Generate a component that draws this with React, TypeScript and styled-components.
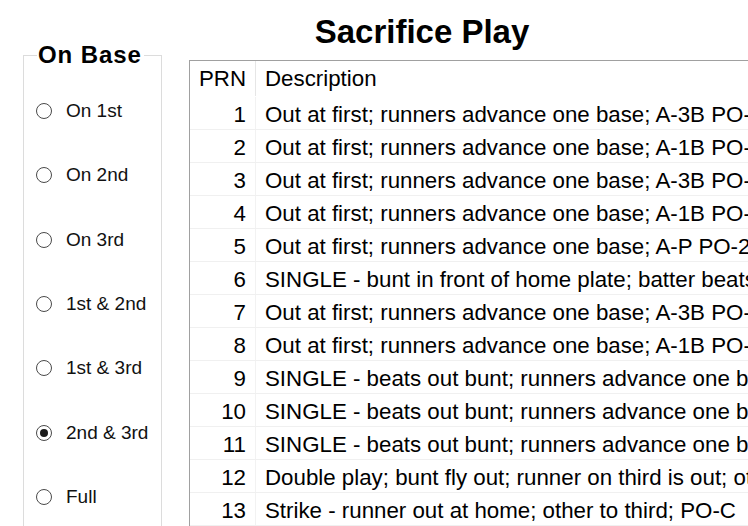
import React from "react";
import styled, { createGlobalStyle } from "styled-components";

const GlobalStyle = createGlobalStyle`
  html, body {
    margin: 0;
    padding: 0;
    background: #ffffff;
  }
  body {
    font-family: "Liberation Sans", Arial, sans-serif;
    color: #000000;
    overflow: hidden;
  }
`;

const Page = styled.div`
  width: 748px;
  height: 526px;
  overflow: hidden;
  display: flex;
  flex-direction: column;
`;

const Title = styled.h1`
  margin: 0;
  padding: 13px 0 0 96px;
  font-size: 33px;
  font-weight: bold;
  line-height: 37px;
  text-align: center;
`;

const Body = styled.div`
  display: flex;
  align-items: flex-start;
  gap: 27px;
  padding-left: 23px;
  margin-top: -7px;
`;

const GroupBox = styled.fieldset`
  width: 139px;
  height: 520px;
  margin: 0;
  padding: 12px 0 0 12px;
  border: 1px solid #dcdcdc;
  box-sizing: border-box;
  flex-shrink: 0;
`;

const Legend = styled.legend`
  margin-left: 1px;
  padding: 0 2px 0 1px;
  font-size: 24px;
  font-weight: bold;
  line-height: 24px;
  letter-spacing: 0.9px;
`;

const RadioList = styled.div`
  display: grid;
  grid-auto-rows: 64.33px;
`;

const RadioItem = styled.label`
  display: flex;
  align-items: center;
  gap: 14px;
  font-size: 19px;
  color: #111111;
`;

const RadioCircle = styled.span<{ $checked?: boolean }>`
  width: 16px;
  height: 16px;
  border-radius: 50%;
  border: 1.5px solid #4a4a4a;
  box-sizing: border-box;
  display: flex;
  align-items: center;
  justify-content: center;
  flex-shrink: 0;

  &::after {
    content: "";
    width: 8px;
    height: 8px;
    border-radius: 50%;
    background: #1a1a1a;
    display: ${(p) => (p.$checked ? "block" : "none")};
  }
`;

const Grid = styled.div`
  margin-top: 17px;
  width: 640px;
  flex-shrink: 0;
  border-left: 1px solid #a0a0a0;
  border-top: 1px solid #a0a0a0;
  font-size: 22.3px;
  white-space: nowrap;
`;

const Row = styled.div<{ $header?: boolean }>`
  display: grid;
  grid-template-columns: 66px 1fr;
  height: ${(p) => (p.$header ? "36px" : "33px")};
  box-sizing: border-box;
  border-bottom: 1px solid ${(p) => (p.$header ? "transparent" : "#f0f0f0")};
`;

const NumCell = styled.div<{ $header?: boolean }>`
  display: flex;
  align-items: center;
  justify-content: flex-end;
  padding: ${(p) => (p.$header ? "0 9px 0 0" : "3px 9px 0 0")};
  border-right: 1px solid ${(p) => (p.$header ? "#e6e6e6" : "#f2f2f2")};
`;

const TextCell = styled.div<{ $header?: boolean }>`
  display: flex;
  align-items: center;
  padding: ${(p) => (p.$header ? "0 0 0 9px" : "3px 0 0 9px")};
  overflow: hidden;
`;

const bases = [
  "On 1st",
  "On 2nd",
  "On 3rd",
  "1st & 2nd",
  "1st & 3rd",
  "2nd & 3rd",
  "Full",
];

const plays = [
  "Out at first; runners advance one base; A-3B PO-1B",
  "Out at first; runners advance one base; A-1B PO-2B",
  "Out at first; runners advance one base; A-3B PO-1B",
  "Out at first; runners advance one base; A-1B PO-2B",
  "Out at first; runners advance one base; A-P PO-2B",
  "SINGLE - bunt in front of home plate; batter beats throw",
  "Out at first; runners advance one base; A-3B PO-1B",
  "Out at first; runners advance one base; A-1B PO-2B",
  "SINGLE - beats out bunt; runners advance one base",
  "SINGLE - beats out bunt; runners advance one base",
  "SINGLE - beats out bunt; runners advance one base",
  "Double play; bunt fly out; runner on third is out; other holds",
  "Strike - runner out at home; other to third; PO-C",
];

export default function App() {
  const selected = "2nd & 3rd";

  return (
    <Page>
      <GlobalStyle />
      <Title>Sacrifice Play</Title>
      <Body>
        <GroupBox>
          <Legend>On Base</Legend>
          <RadioList>
            {bases.map((base) => (
              <RadioItem key={base}>
                <RadioCircle $checked={base === selected} />
                {base}
              </RadioItem>
            ))}
          </RadioList>
        </GroupBox>
        <Grid>
          <Row $header>
            <NumCell $header>PRN</NumCell>
            <TextCell $header>Description</TextCell>
          </Row>
          {plays.map((play, i) => (
            <Row key={i}>
              <NumCell>{i + 1}</NumCell>
              <TextCell>{play}</TextCell>
            </Row>
          ))}
        </Grid>
      </Body>
    </Page>
  );
}
